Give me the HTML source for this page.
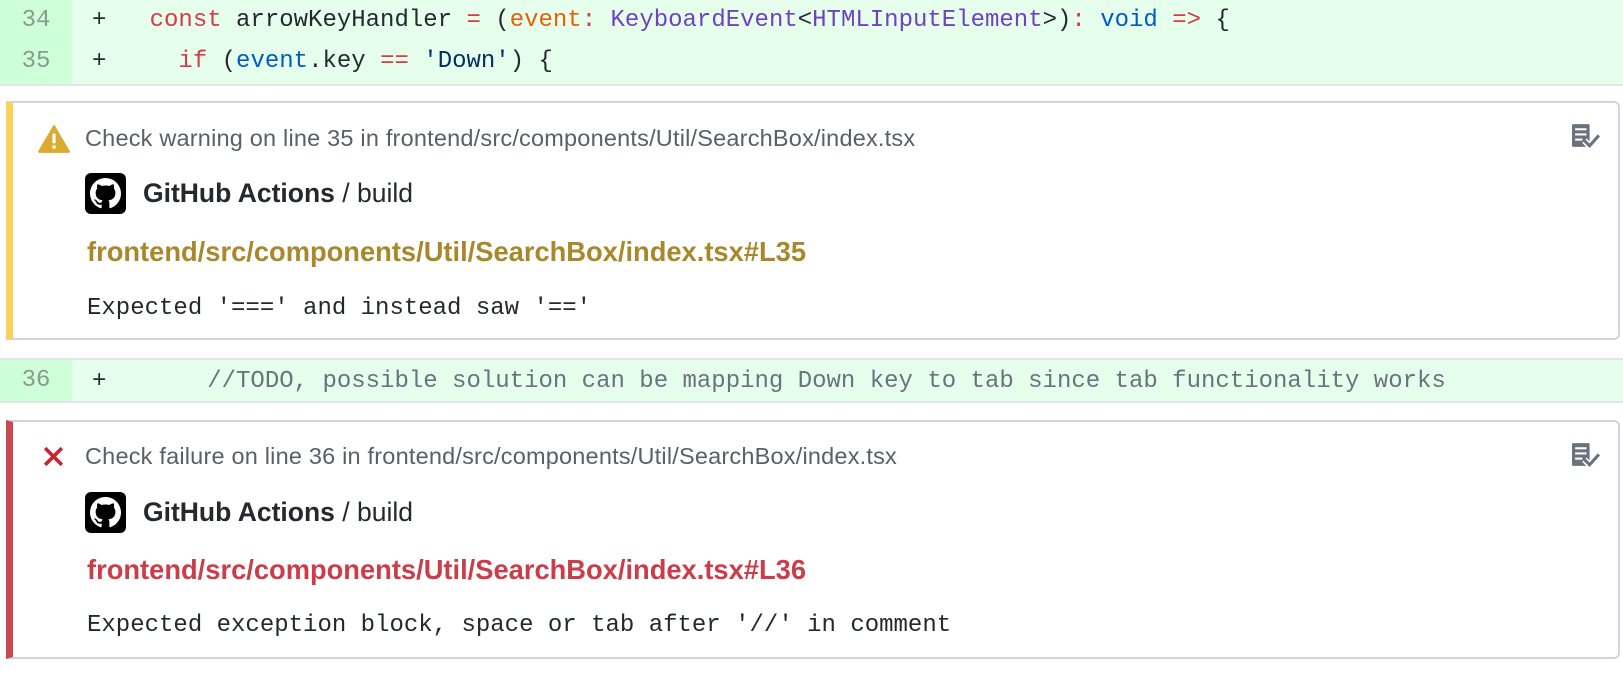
<!DOCTYPE html>
<html><head><meta charset="utf-8"><style>
*{margin:0;padding:0;box-sizing:border-box}
body{width:1623px;height:676px;background:#fff;position:relative;overflow:hidden;font-family:"Liberation Sans",sans-serif}
.row{position:absolute;left:0;width:1623px;background:#e6ffec;border-bottom:2px solid #e1e4e8}
.ln{position:absolute;left:0;top:0;width:72px;height:100%;background:#cdffd8;color:#8a9a8e;font-family:"Liberation Mono",monospace;font-size:24px;text-align:center}
.ln div{position:absolute;width:72px;line-height:30px}
.code{position:absolute;left:92px;font-family:"Liberation Mono",monospace;font-size:24px;line-height:30px;color:#24292e;white-space:pre}
.box{position:absolute;left:6px;width:1614px;height:239px;border:2px solid #d1d5da;border-left:7px solid;border-radius:0 6px 6px 0;background:#fff}
.hd{position:absolute;left:72px;font-size:23.5px;line-height:30px;color:#586069;white-space:nowrap;letter-spacing:0.2px}
.gh{position:absolute;left:72px;display:flex;align-items:center;font-size:26.5px;color:#24292e;white-space:nowrap;height:42px}
.av{width:41px;height:41px;background:#000;border-radius:6px;margin-right:17px;display:flex;align-items:center;justify-content:center}
.lk{position:absolute;left:74px;font-size:27.3px;line-height:34px;font-weight:bold;white-space:nowrap}
.msg{position:absolute;left:74px;font-family:"Liberation Mono",monospace;font-size:24px;line-height:30px;color:#24292e;white-space:pre}
.ic{position:absolute;right:16px}
.k{color:#d73a49}.o{color:#e36209}.p{color:#6f42c1}.b{color:#005cc5}.s{color:#032f62}.c{color:#6a737d}
</style></head><body>

<div class="row" style="top:0;height:86px">
<div class="ln"><div style="top:6px">34</div><div style="top:47px">35</div></div>
<div class="code" style="top:6px">+   <span class="k">const</span> arrowKeyHandler <span class="k">=</span> (<span class="o">event</span><span class="k">:</span> <span class="p">KeyboardEvent</span>&lt;<span class="p">HTMLInputElement</span>&gt;)<span class="k">:</span> <span class="b">void</span> <span class="k">=&gt;</span> {</div>
<div class="code" style="top:47px">+     <span class="k">if</span> (<span class="b">event</span>.key <span class="k">==</span> <span class="s">'Down'</span>) {</div>
</div>

<div class="box" style="top:101px;border-left-color:#f9d15b">
<svg style="position:absolute;left:25px;top:22px" width="32" height="28" viewBox="0 0 30 26"><path d="M15 1 L29 25 L1 25 Z" fill="#dbab2f" stroke="#dbab2f" stroke-width="2" stroke-linejoin="round"/><rect x="13.5" y="8" width="3" height="9" fill="#fff"/><rect x="13.5" y="19" width="3" height="3" fill="#fff"/></svg>
<div class="hd" style="top:20px">Check warning on line 35 in frontend/src/components/Util/SearchBox/index.tsx</div>
<svg class="ic" style="top:20px" width="31" height="27" viewBox="0 0 30 26"><rect x="1" y="1" width="17" height="22" rx="1" fill="#6a737d"/><rect x="4" y="5" width="11" height="2" fill="#fff"/><rect x="4" y="10" width="11" height="2" fill="#fff"/><rect x="4" y="15" width="7" height="2" fill="#fff"/><path d="M13 17 l5 5 l9 -10" fill="none" stroke="#fff" stroke-width="6"/><path d="M13 17 l5 5 l9 -10" fill="none" stroke="#6a737d" stroke-width="3"/></svg>
<div class="gh" style="top:69px"><div class="av"><svg width="31" height="31" viewBox="0 0 16 16"><path fill="#fff" d="M8 0C3.58 0 0 3.58 0 8c0 3.54 2.29 6.53 5.47 7.59.4.07.55-.17.55-.38 0-.19-.01-.82-.01-1.49-2.01.37-2.53-.49-2.69-.94-.09-.23-.48-.94-.82-1.13-.28-.15-.68-.52-.01-.53.63-.01 1.08.58 1.23.82.72 1.21 1.87.87 2.33.66.07-.52.28-.87.51-1.07-1.78-.2-3.64-.89-3.64-3.95 0-.87.31-1.59.82-2.15-.08-.2-.36-1.02.08-2.12 0 0 .67-.21 2.2.82.64-.18 1.32-.27 2-.27.68 0 1.36.09 2 .27 1.53-1.04 2.2-.82 2.2-.82.44 1.1.16 1.92.08 2.12.51.56.82 1.27.82 2.15 0 3.07-1.87 3.75-3.65 3.95.29.25.54.73.54 1.48 0 1.07-.01 1.93-.01 2.2 0 .21.15.46.55.38A8.013 8.013 0 0016 8c0-4.42-3.58-8-8-8z"/></svg></div><b>GitHub Actions</b>&nbsp;/ build</div>
<div class="lk" style="top:132px;color:#a8882a">frontend/src/components/Util/SearchBox/index.tsx#L35</div>
<div class="msg" style="top:191px">Expected '===' and instead saw '=='</div>
</div>

<div class="row" style="top:358px;height:45px;border-top:2px solid #e1e4e8">
<div class="ln"><div style="top:6px">36</div></div>
<div class="code" style="top:7px">+       <span class="c">//TODO, possible solution can be mapping Down key to tab since tab functionality works</span></div>
</div>

<div class="box" style="top:420px;border-left-color:#cb4a52">
<svg style="position:absolute;left:29px;top:23px" width="23" height="23" viewBox="0 0 22 22"><path d="M3 3 L19 19 M19 3 L3 19" stroke="#cb2431" stroke-width="3.5"/></svg>
<div class="hd" style="top:19px">Check failure on line 36 in frontend/src/components/Util/SearchBox/index.tsx</div>
<svg class="ic" style="top:20px" width="31" height="27" viewBox="0 0 30 26"><rect x="1" y="1" width="17" height="22" rx="1" fill="#6a737d"/><rect x="4" y="5" width="11" height="2" fill="#fff"/><rect x="4" y="10" width="11" height="2" fill="#fff"/><rect x="4" y="15" width="7" height="2" fill="#fff"/><path d="M13 17 l5 5 l9 -10" fill="none" stroke="#fff" stroke-width="6"/><path d="M13 17 l5 5 l9 -10" fill="none" stroke="#6a737d" stroke-width="3"/></svg>
<div class="gh" style="top:69px"><div class="av"><svg width="31" height="31" viewBox="0 0 16 16"><path fill="#fff" d="M8 0C3.58 0 0 3.58 0 8c0 3.54 2.29 6.53 5.47 7.59.4.07.55-.17.55-.38 0-.19-.01-.82-.01-1.49-2.01.37-2.53-.49-2.69-.94-.09-.23-.48-.94-.82-1.13-.28-.15-.68-.52-.01-.53.63-.01 1.08.58 1.23.82.72 1.21 1.87.87 2.33.66.07-.52.28-.87.51-1.07-1.78-.2-3.64-.89-3.64-3.95 0-.87.31-1.59.82-2.15-.08-.2-.36-1.02.08-2.12 0 0 .67-.21 2.2.82.64-.18 1.32-.27 2-.27.68 0 1.36.09 2 .27 1.53-1.04 2.2-.82 2.2-.82.44 1.1.16 1.92.08 2.12.51.56.82 1.27.82 2.15 0 3.07-1.87 3.75-3.65 3.950.29.25.54.73.54 1.48 0 1.07-.01 1.93-.01 2.2 0 .21.15.46.55.38A8.013 8.013 0 0016 8c0-4.42-3.58-8-8-8z"/></svg></div><b>GitHub Actions</b>&nbsp;/ build</div>
<div class="lk" style="top:131px;color:#cb3d49">frontend/src/components/Util/SearchBox/index.tsx#L36</div>
<div class="msg" style="top:189px">Expected exception block, space or tab after '//' in comment</div>
</div>

</body></html>
